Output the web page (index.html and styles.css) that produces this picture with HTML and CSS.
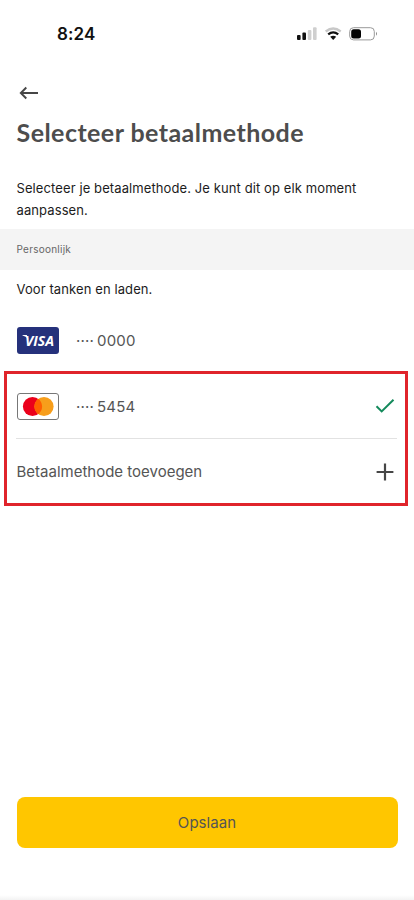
FILE: index.html
```html
<!DOCTYPE html>
<html lang="nl">
<head>
<meta charset="utf-8">
<meta name="viewport" content="width=device-width, initial-scale=1">
<title>Selecteer betaalmethode</title>
<link rel="stylesheet" href="styles.css">
</head>
<body>
<main class="screen">
  <header class="status">
    <span class="time">8:24</span>
    <svg class="status-icons" width="84" height="18" viewBox="0 0 84 18">
      <g fill="#111"><rect x="1" y="10" width="3.6" height="5" rx="1"/><rect x="6.4" y="7.5" width="3.6" height="7.5" rx="1"/></g>
      <g fill="#cfcfcf"><rect x="11.8" y="5" width="3.6" height="10" rx="1"/><rect x="17" y="2.3" width="3.6" height="12.7" rx="1"/></g>
      <g fill="none" stroke-width="2.3">
        <path d="M29.7 6.5Q37.2 .5 44.7 6.5" stroke="#c8c8c8"/>
        <path d="M32.2 9.4Q37.2 5.4 42.2 9.4" stroke="#111"/>
      </g>
      <path d="M34.2 11.8Q37.2 9.6 40.2 11.8L37.2 15Z" fill="#111"/>
      <rect x="53.7" y="2.7" width="24.6" height="12.2" rx="3.8" fill="none" stroke="#999"/>
      <rect x="55.2" y="4.2" width="9.8" height="9.2" rx="2.5" fill="#000"/>
      <path d="M80 6.8q2 2 0 4z" fill="#888"/>
    </svg>
  </header>
  <svg class="back" width="20" height="14" viewBox="0 0 20 14" fill="none" stroke="#464646" stroke-width="1.9"><path d="M19 7H2M7.3 1.5 1.8 7l5.5 5.5"/></svg>
  <h1>Selecteer betaalmethode</h1>
  <p class="intro">Selecteer je betaalmethode. Je kunt dit op elk moment aanpassen.</p>
  <h2>Persoonlijk</h2>
  <p class="usage">Voor tanken en laden.</p>
  <div class="row visa">
    <svg class="card" width="42" height="27" viewBox="0 0 42 27"><rect width="42" height="27" rx="3" fill="#25317b"/><text class="visa-text" x="8" y="19" textLength="29" lengthAdjust="spacingAndGlyphs">VISA</text><path d="M5.5 8h4.3l1.6 4.2Q9 9.2 5.5 8.4z" fill="#fff"/></svg>
    <span class="dots">····</span><span class="number">0000</span>
  </div>
  <section class="highlight">
    <div class="row selected">
      <svg class="card" width="42" height="27" viewBox="0 0 42 27"><rect x=".5" y=".5" width="41" height="26" rx="2.5" fill="#fff" stroke="#777"/><circle cx="15.5" cy="13.5" r="9.6" fill="#eb001b"/><circle cx="27" cy="13.5" r="9.6" fill="#f79e1b"/><path d="M21.25 5.8a9.6 9.6 0 0 1 0 15.4a9.6 9.6 0 0 1 0-15.4" fill="#ff5f00"/></svg>
      <span class="dots">····</span><span class="number">5454</span>
      <svg class="mark" width="20" height="16" viewBox="0 0 20 16" fill="none" stroke="#148a5c" stroke-width="2"><path d="M1.5 8.2 6.7 13.4 18.5 1.8"/></svg>
    </div>
    <div class="row add">
      <span class="add-label">Betaalmethode toevoegen</span>
      <svg class="mark" width="18" height="18" viewBox="0 0 18 18" stroke="#464646" stroke-width="2.2"><path d="M9 .6v16.8M.6 9h16.8"/></svg>
    </div>
  </section>
  <button class="save" type="button">Opslaan</button>
  <div class="bottom-shade"></div>
</main>
</body>
</html>
```
FILE: styles.css
```css
* { box-sizing: border-box; }
body { margin: 0; background: #fff; font-family: Inter, "Liberation Sans", sans-serif; }
.screen { display: flex; flex-direction: column; width: 414px; height: 900px; overflow: hidden; }
.status { display: flex; height: 67px; padding: 25px 34px 0 57px; justify-content: space-between; align-items: flex-start; }
.time { font-size: 17px; line-height: 18px; font-weight: 600; color: #111; letter-spacing: .15px; }
.status-icons { flex: none; }
.back { margin: 18.5px 0 0 18.5px; flex: none; }
h1 { margin: 16.5px 0 0 16.5px; font-family: Lato, sans-serif; font-size: 25px; line-height: 32px; font-weight: 700; color: #4d4d4d; white-space: nowrap; letter-spacing: .45px; }
.intro { margin: 29px 40px 0 16.5px; font-size: 13px; line-height: 22px; color: #1c1c1c; letter-spacing: .1px; }
h2 { margin: 8px 0 0; padding-left: 16.5px; height: 41px; background: #f4f4f4; color: #666; font-size: 10px; font-weight: 400; line-height: 41px; letter-spacing: .25px; }
.usage { margin: 8px 0 0 16.5px; font-size: 13px; line-height: 22px; color: #1c1c1c; letter-spacing: .1px; }
.row { display: flex; align-items: center; color: #555; font-size: 15px; }
.visa { height: 27px; margin: 27px 17px 0; }
.card { flex: none; }
.visa-text { font: italic 700 15px "Open Sans", sans-serif; fill: #fff; }
.dots { width: 21px; margin-left: 17px; letter-spacing: .2px; }
.number { letter-spacing: .2px; }
.highlight { height: 135px; margin: 17px 6px 0 4px; border: 3px solid #e0242b; padding: 0 8px 0 9px; }
.selected { height: 65px; border-bottom: 1px solid #e2e2e2; padding: 0 2px 0 1px; }
.mark { margin-left: auto; flex: none; }
.add { height: 65px; padding: 0 3px 0 .5px; }
.add-label { letter-spacing: 0; }
.save { margin: 291px 16.5px 0; height: 51px; border: 0; border-radius: 8px; background: #ffc600; color: #555; font: 400 15px Inter, sans-serif; letter-spacing: .05px; flex: none; }
.bottom-shade { margin-top: auto; height: 5px; background: linear-gradient(#fff, #f3f3f3); }
```
